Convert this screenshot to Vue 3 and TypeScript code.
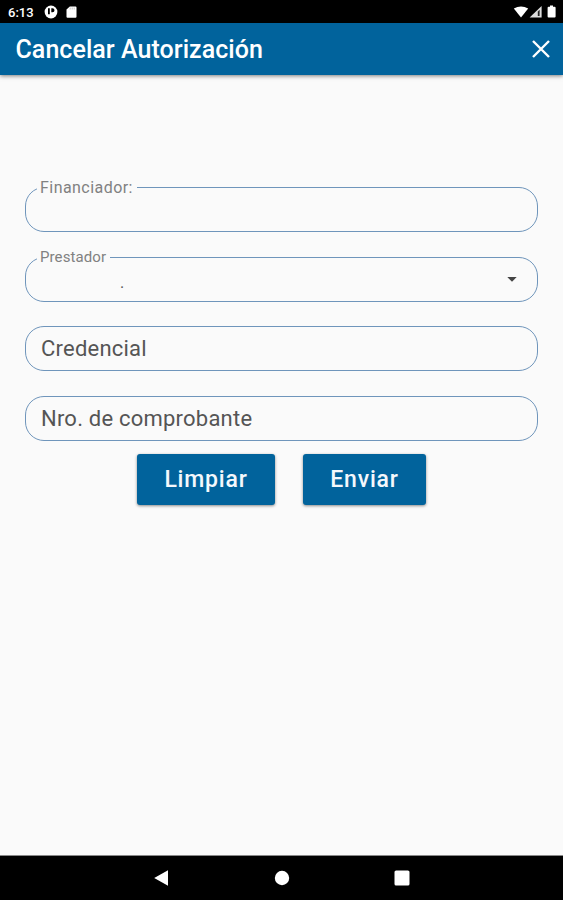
<script setup lang="ts">
import { ref } from 'vue'

interface Field {
  id: string
  label: string
  floating: boolean
  value?: string
  select?: boolean
}

const fields = ref<Field[]>([
  { id: 'financiador', label: 'Financiador:', floating: true },
  { id: 'prestador', label: 'Prestador', floating: true, value: '.', select: true },
  { id: 'credencial', label: 'Credencial', floating: false },
  { id: 'comprobante', label: 'Nro. de comprobante', floating: false },
])
</script>

<template>
  <div class="screen">
    <div class="status">
      <span class="clock">6:13</span>
      <svg class="app-icon" width="14" height="14" viewBox="0 0 14 14">
        <circle cx="7" cy="7" r="6.4" fill="#fff" />
        <path d="M4 3.2h1.8v6H4zM7.3 3.2h1.2a2 2 0 0 1 0 4H7.3z" fill="#000" />
      </svg>
      <svg class="sd-icon" width="11" height="13" viewBox="0 0 11 13">
        <path d="M3.8.4h5.7a1 1 0 0 1 1 1v9.4a1 1 0 0 1-1 1h-8a1 1 0 0 1-1-1V3.6z" fill="#fff" />
        <path d="M4.2 1.5v2M6.2 1.5v2M8.2 1.5v2" stroke="#aaa" stroke-width=".7" />
      </svg>
      <span class="spacer"></span>
      <svg width="50" height="16" viewBox="0 0 50 16">
        <path d="M.8 4.6Q8 .4 15.2 4.6L8 13.4z" fill="#fff" />
        <path d="M28.6 1.9V13.6H16.6z" fill="#ddd" />
        <path d="M26.6 5.8V12h-1.8V7.7z" fill="#222" />
        <path d="M35.6 2.8H37V1.5h3v1.3h1.6q1 0 1 1v8.7q0 1-1 1h-6q-1 0-1-1V3.8q0-1 1-1z" fill="#fff" />
      </svg>
    </div>

    <header class="bar">
      <h1>Cancelar Autorización</h1>
      <svg class="close" width="20" height="20" viewBox="0 0 20 20">
        <path d="M2 2l16 16M18 2L2 18" stroke="#fff" stroke-width="2.4" />
      </svg>
    </header>

    <main class="form">
      <fieldset v-for="f in fields" :key="f.id" class="field" :class="[f.id, { floating: f.floating }]">
        <legend v-if="f.floating"><span>{{ f.label }}</span></legend>
        <div class="content">
          <span v-if="!f.floating" class="placeholder">{{ f.label }}</span>
          <span v-if="f.value" class="value">{{ f.value }}</span>
          <svg v-if="f.select" class="caret" width="10" height="5" viewBox="0 0 10 5">
            <path d="M.3 0h9.4L5 4.7z" fill="#444" />
          </svg>
        </div>
      </fieldset>
      <div class="actions">
        <button class="clear" type="button"><span>Limpiar</span></button>
        <button class="send" type="button"><span>Enviar</span></button>
      </div>
    </main>

    <nav class="nav">
      <svg width="16" height="18" viewBox="0 0 16 18"><path d="M14 1.2v15.6L.2 9z" fill="#fff" /></svg>
      <svg width="16" height="16" viewBox="0 0 16 16"><circle cx="8" cy="8" r="7.2" fill="#fff" /></svg>
      <svg width="16" height="16" viewBox="0 0 16 16"><rect x=".5" y=".5" width="15" height="15" rx="1.6" fill="#fff" /></svg>
    </nav>
  </div>
</template>

<style>
body {
  background: #fafafa;
}
</style>

<style scoped>
.screen {
  display: flex;
  flex-direction: column;
  height: 900px;
  background: #fafafa;
  font-family: Roboto, sans-serif;
}
.status {
  display: flex;
  align-items: center;
  height: 23px;
  padding: 1px 0 0 8px;
  box-sizing: border-box;
  background: #000;
}
.clock {
  color: #fff;
  font-size: 13px;
  font-weight: 500;
  width: 36px;
}
.sd-icon {
  margin-left: 8px;
}
.spacer {
  flex: 1;
}
.bar {
  display: flex;
  align-items: center;
  justify-content: space-between;
  height: 52px;
  padding: 0 12px 0 15.5px;
  background: #01639c;
  box-shadow: 0 1px 4px rgba(0, 0, 0, 0.5);
}
h1 {
  margin: 0;
  padding-top: 1px;
  color: #fff;
  font-size: 25px;
  font-weight: 500;
  line-height: 51px;
  letter-spacing: 0.05px;
  white-space: nowrap;
}
.form {
  flex: 1;
  padding: 105px 25px 0;
}
.field {
  box-sizing: border-box;
  min-width: 0;
  height: 45px;
  margin: 0 0 25px;
  padding: 0 0 0 15px;
  border: 1px solid #6f95bb;
  border-radius: 19px;
}
.field.floating {
  height: 52px;
  margin-bottom: 18px;
  padding-left: 11px;
}
.field.prestador {
  margin-bottom: 24px;
}
legend {
  height: 15px;
  padding: 0 4px 0 3px;
  color: #818181;
  font-size: 16px;
  line-height: 15px;
  letter-spacing: 0.45px;
}
.prestador legend {
  font-size: 15px;
  letter-spacing: 0.1px;
}
.content {
  display: flex;
  align-items: center;
  height: 42px;
}
.floating .content {
  height: 35px;
}
.placeholder {
  color: #555;
  font-size: 22px;
  letter-spacing: 0.22px;
}
.value {
  margin-left: 83px;
  color: #555;
  font-size: 16px;
}
.caret {
  margin: 0 20px 7px auto;
}
.actions {
  display: flex;
  justify-content: center;
  gap: 28px;
  margin-top: -12px;
}
button {
  height: 51px;
  padding: 0;
  border: 0;
  border-radius: 3px;
  background: #01639c;
  box-shadow: 0 1px 3px rgba(0, 0, 0, 0.45);
  color: #f4f8fc;
  font: 500 23px Roboto, sans-serif;
  letter-spacing: 0.8px;
}
.clear {
  width: 138px;
}
.send {
  width: 123px;
}
.nav {
  display: flex;
  align-items: center;
  justify-content: center;
  gap: 104px;
  height: 44px;
  background: #000;
  box-shadow: 0 -1px 0 #888;
}
</style>
